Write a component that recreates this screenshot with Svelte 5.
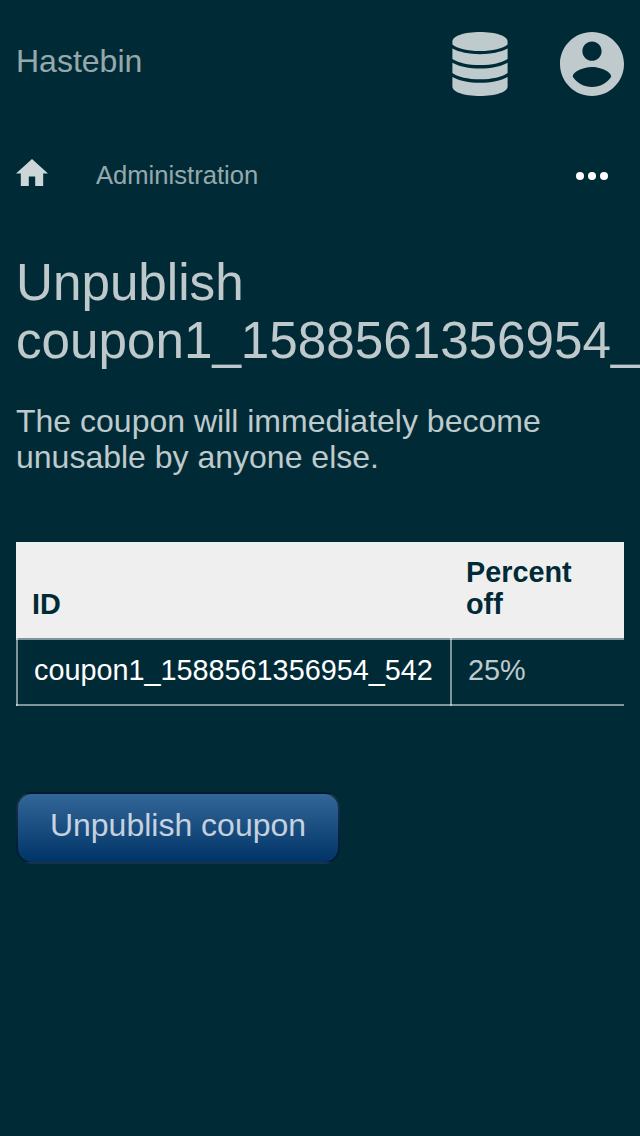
<script>
  const title = 'Unpublish coupon1_1588561356954_542';
  const coupon = { id: 'coupon1_1588561356954_542', percent: '25%' };
</script>

<div class="page">
  <header>
    <span class="brand">Hastebin</span>
    <div class="icons">
      <svg width="56" height="64" viewBox="0 0 56 64">
        <path d="M.4 9.500C.4 4 12.500 0 28 0s27.600 4 27.600 9.500v3C51 16.500 40.500 19 28 19S5 16.500.4 12.500z" />
        <path d="M.4 16.600C7 20.200 17 22.200 28 22.200s21-2 27.600-5.600V27C50 30.800 40 33.100 28 33.100S6 30.800.4 27z" />
        <path d="M.4 30.700C7 34.400 17 36.500 28 36.500s21-2.100 27.600-5.800V41C50 45 40 47.300 28 47.300S6 45 .4 41z" />
        <path d="M.4 44.900C7 48.600 17 50.700 28 50.700s21-2.100 27.600-5.800v9.600C55.600 60 43.500 64 28 64S.4 60 .4 54.500z" />
      </svg>
      <svg width="64" height="64" viewBox="2 2 20 20">
        <path d="M12 2C6.480 2 2 6.480 2 12s4.480 10 10 10 10-4.480 10-10S17.520 2 12 2zm0 3c1.660 0 3 1.340 3 3s-1.340 3-3 3-3-1.340-3-3 1.340-3 3-3zm0 14.200c-2.500 0-4.710-1.280-6-3.220.03-1.990 4-3.080 6-3.080 1.990 0 5.970 1.090 6 3.080-1.290 1.940-3.500 3.220-6 3.220z" />
      </svg>
    </div>
  </header>

  <nav>
    <svg class="home" width="32" height="27.200" viewBox="2 3 20 17"><path d="M10 20v-6h4v6h5v-8h3L12 3 2 12h3v8z" /></svg>
    <span class="crumb">Administration</span>
    <svg class="more" width="32" height="8" viewBox="0 0 32 8"><circle cx="4" cy="4" r="4" /><circle cx="16" cy="4" r="4" /><circle cx="28" cy="4" r="4" /></svg>
  </nav>

  <main>
    <h1>{title}</h1>
    <p>The coupon will immediately become unusable by anyone else.</p>
    <div class="scroller">
      <table>
        <thead><tr><th class="id">ID</th><th>Percent<br />off</th></tr></thead>
        <tbody><tr><td class="id">{coupon.id}</td><td>{coupon.percent}</td></tr></tbody>
      </table>
    </div>
    <button>Unpublish coupon</button>
  </main>
</div>

<style>
  :global(body) {
    margin: 0;
    background: #002b36;
  }
  .page {
    box-sizing: border-box;
    width: 640px;
    height: 1136px;
    padding: 32px 16px 0;
    overflow: hidden;
    background: #002b36;
    color: rgba(255, 255, 255, 0.75);
    font: 32px/36px "Liberation Sans", Arial, sans-serif;
  }
  header {
    display: flex;
    justify-content: space-between;
    align-items: flex-start;
    height: 64px;
  }
  .brand {
    padding-top: 11px;
    color: rgba(255, 255, 255, 0.6);
  }
  .icons {
    display: flex;
    gap: 52px;
    fill: #bfcacd;
  }
  svg {
    display: block;
  }
  nav {
    display: flex;
    align-items: flex-start;
    margin-top: 62px;
    height: 36px;
    padding-right: 16px;
  }
  .home {
    margin-top: 1px;
    fill: #ccd5d7;
  }
  .crumb {
    margin: 2px auto 0 48px;
    font-size: 25.6px;
    line-height: 30px;
    color: rgba(255, 255, 255, 0.6);
  }
  .more {
    margin-top: 14px;
    fill: #fff;
  }
  h1 {
    margin: 60px 0 0;
    font-size: 51.2px;
    line-height: 58px;
    font-weight: 400;
  }
  p {
    margin: 33px 0 0;
  }
  .scroller {
    margin-top: 67px;
    overflow: hidden;
  }
  table {
    width: 680px;
    table-layout: fixed;
    border-spacing: 0;
    font-size: 28.8px;
    line-height: 32px;
  }
  th {
    height: 96px;
    box-sizing: border-box;
    padding: 14px 16px 18px;
    background: #efefef;
    color: #002b36;
    text-align: left;
    vertical-align: bottom;
  }
  td {
    height: 68px;
    box-sizing: border-box;
    padding: 15px 16px 19px 18px;
    background:
      linear-gradient(rgba(255, 255, 255, 0.5), rgba(255, 255, 255, 0.5)) 0 0 / 100% 2px no-repeat,
      linear-gradient(rgba(255, 255, 255, 0.5), rgba(255, 255, 255, 0.5)) 0 100% / 100% 2px no-repeat,
      linear-gradient(rgba(255, 255, 255, 0.5), rgba(255, 255, 255, 0.5)) 0 100% / 2px 100% no-repeat;
  }
  .id {
    width: 434px;
    white-space: nowrap;
  }
  td.id {
    color: #fff;
  }
  button {
    display: block;
    margin: 86px 0 0;
    width: 324px;
    height: 72px;
    box-sizing: border-box;
    padding: 0 0 6px;
    border: 2px solid rgba(0, 0, 0, 0.5);
    border-radius: 16px;
    background: linear-gradient(#336699, #003366);
    color: rgba(255, 255, 255, 0.75);
    font: inherit;
  }
</style>
